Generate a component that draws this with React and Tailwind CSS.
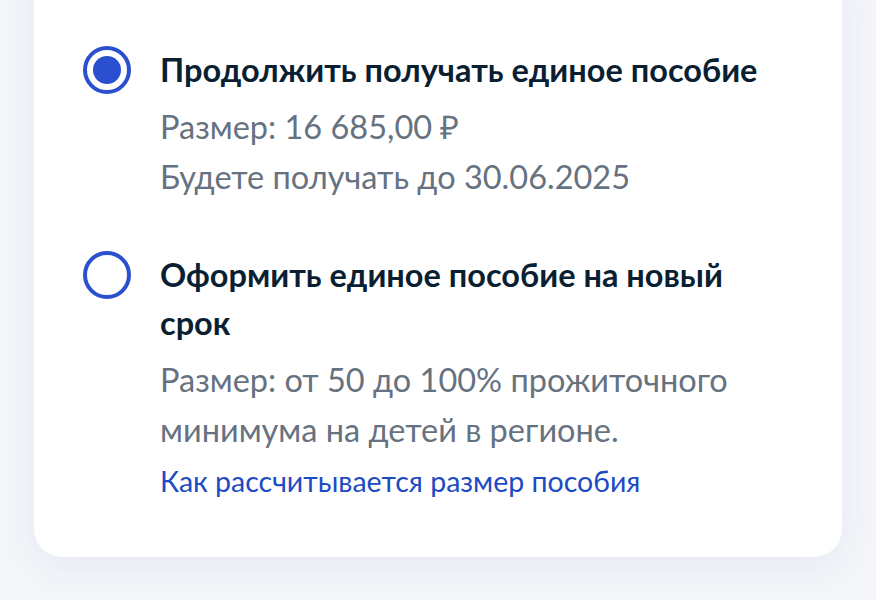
import React, { useState } from "react";

const options = [
  {
    id: "continue",
    title: "Продолжить получать единое пособие",
    lines: ["Размер: 16 685,00 ₽", "Будете получать до 30.06.2025"],
  },
  {
    id: "new",
    title: "Оформить единое пособие на новый срок",
    lines: ["Размер: от 50 до 100% прожиточного минимума на детей в регионе."],
    link: "Как рассчитывается размер пособия",
  },
];

const Radio = ({ checked }) => (
  <span className="flex h-[48px] w-[48px] shrink-0 items-center justify-center rounded-full border-[4px] border-[#2a50cf]">
    {checked && <span className="h-[28px] w-[28px] rounded-full bg-[#2a50cf]" />}
  </span>
);

const App = () => {
  const [selected, setSelected] = useState("continue");

  return (
    <div className="flex min-h-[600px] flex-col overflow-hidden bg-[#f4f6fa] px-[34px] font-['Lato',sans-serif]">
      <div className="mt-[-40px] rounded-[28px] bg-white pl-[49px] pr-[40px] pt-[86px] pb-[50px] shadow-[0_10px_40px_rgba(35,60,120,0.07)]">
        <div className="flex flex-col gap-[49px]">
          {options.map((opt) => (
            <div
              key={opt.id}
              className="flex cursor-pointer gap-[29px]"
              onClick={() => setSelected(opt.id)}
            >
              <Radio checked={selected === opt.id} />
              <div className="max-w-[610px]">
                <div className="text-[32.5px] font-bold leading-[48px] text-[#0b1f33]">
                  {opt.title}
                </div>
                <div className="mt-[8px] text-[32.5px] leading-[50px] text-[#66727f]">
                  {opt.lines.map((line) => (
                    <div key={line}>{line}</div>
                  ))}
                </div>
                {opt.link && (
                  <a className="block text-[28.5px] leading-[52px] text-[#1d4bc4]">
                    {opt.link}
                  </a>
                )}
              </div>
            </div>
          ))}
        </div>
      </div>
    </div>
  );
};

export default App;
